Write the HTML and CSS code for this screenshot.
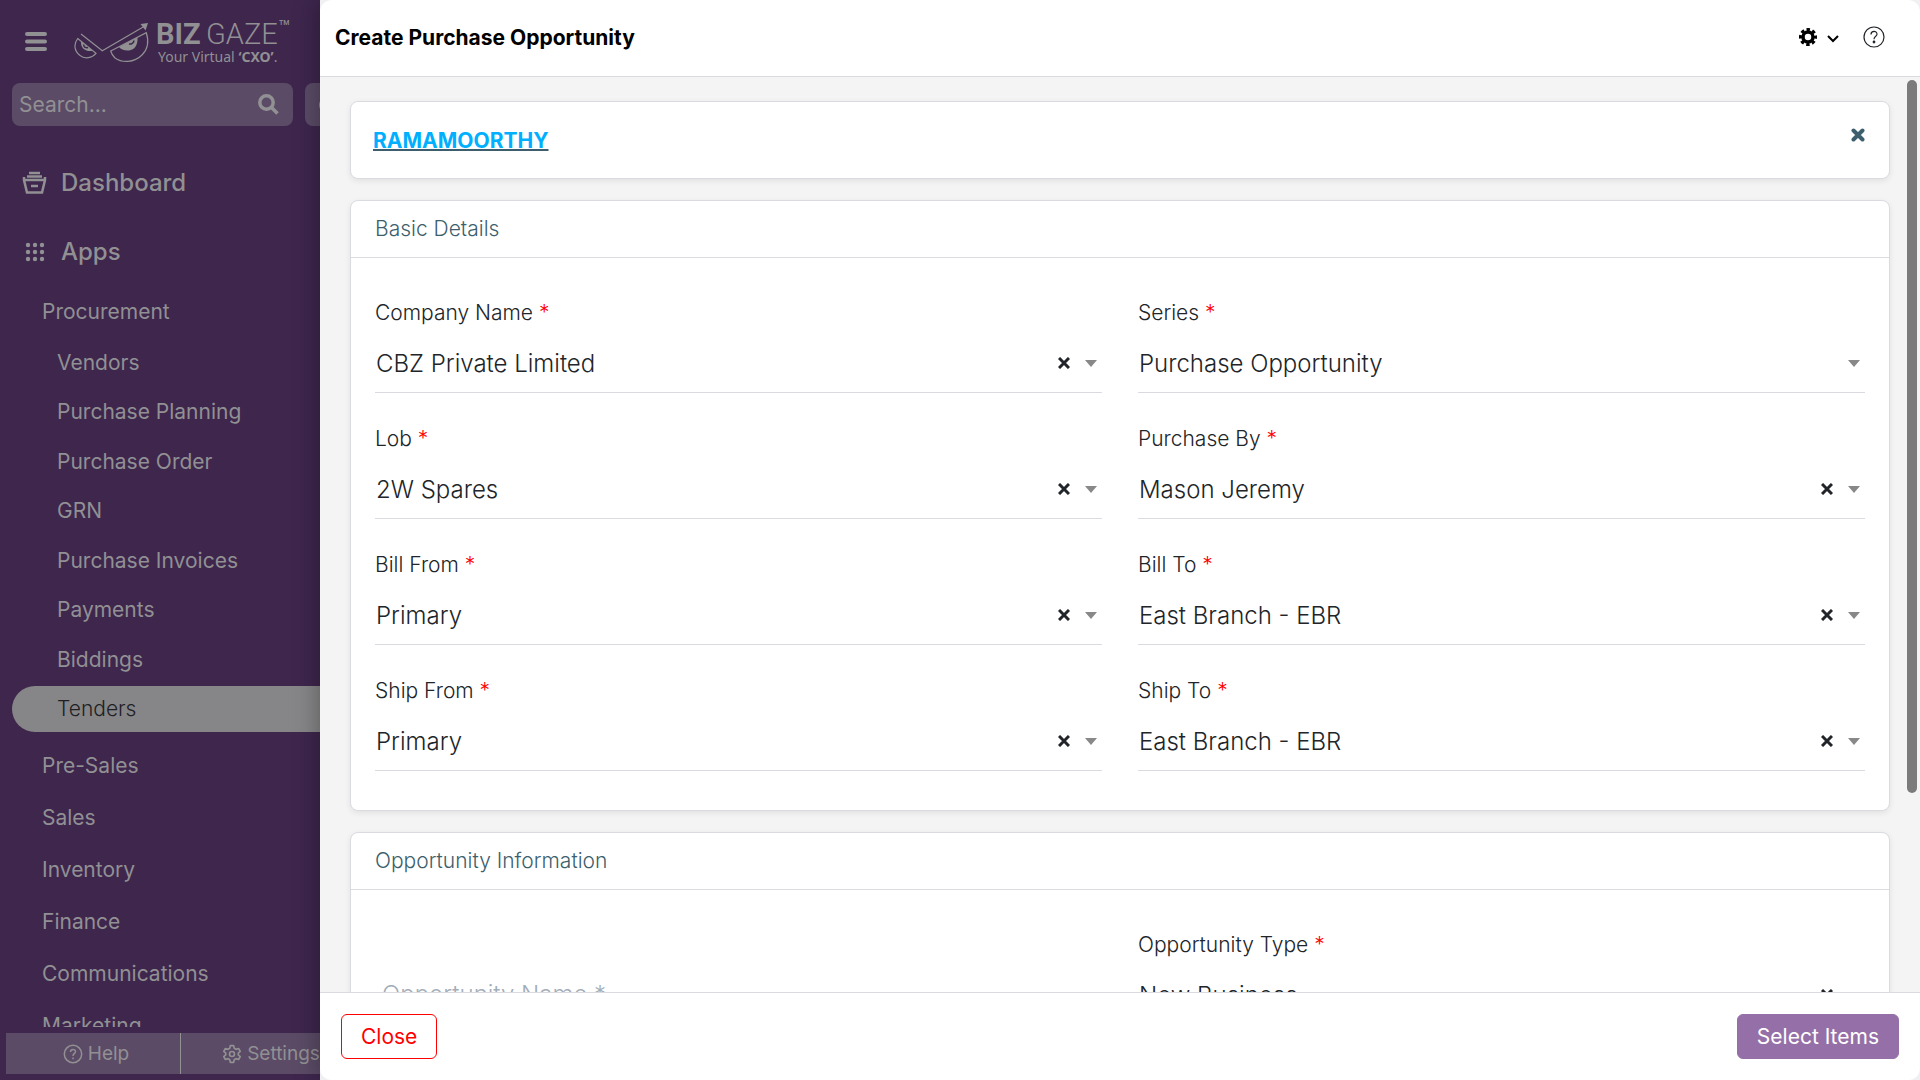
FILE: index.html
```html
<!DOCTYPE html>
<html lang="en">
<head>
  <meta charset="UTF-8" />
  <meta name="viewport" content="width=device-width, initial-scale=1.0"/>
  <title>Create Purchase Opportunity</title>
  <link rel="stylesheet" href="styles.css">
</head>
<body>
  <aside class="sidebar">
    <div class="brand">
      <button class="icon-btn" type="button" aria-label="Menu">
        <svg width="22" height="22" viewBox="0 0 22 22" stroke="currentColor" stroke-width="4" stroke-linecap="round">
          <path d="M2 3h18M2 10.500h18M2 18h18"/>
        </svg>
      </button>
      <svg class="logo" width="216" height="48" viewBox="0 0 216 48" fill="none" stroke="currentColor">
        <path d="M7 16L28.3 32.7L70 8.5" stroke-width="1.2"/>
        <path d="M74 5L66.5 6L71.5 12.5Z" fill="currentColor" stroke="none"/>
        <path d="M3.7 20.5L22 35.3C18 40 11 41.5 6 37.5C0 33 -.5 26 3.7 20.5Z" stroke-width="1.2"/>
        <path d="M36.7 33L72.3 14.7C75 23 74 31 68 37C60 45 48 45 41 40C39 38 37.500 36 36.700 33Z" stroke-width="1.2"/>
        <path d="M7 23.500L18.500 32.700C14 34 6.500 32 7 23.500ZM45 29L63.500 19.500C64 27 60.500 32 55 32.500C50.500 33 47 31.500 45 29Z" fill="currentColor" stroke="none"/>
        <path d="M9.500 26.500C10 29.500 12 30 14 29.500M55 26C57 26.500 60 25 60 22.500" stroke="#3e264d" stroke-width="1.500"/>
        <g fill="currentColor" stroke="none">
          <text class="logo-bold" x="82" y="26">BIZ</text>
          <text class="logo-light" x="132" y="26">GAZE</text>
          <text class="logo-tm" x="205" y="7">TM</text>
          <text class="logo-tag" x="84" y="44">Your Virtual <tspan font-weight="700">‘CXO’</tspan>.</text>
        </g>
      </svg>
    </div>

    <div class="search-row">
      <form class="search">
        <input type="text" placeholder="Search..." aria-label="Search">
        <button class="icon-btn" type="button" aria-label="Search">
          <svg width="21" height="21" viewBox="0 0 21 21" fill="none" stroke="currentColor" stroke-width="3.500">
            <circle cx="8.500" cy="8.500" r="6.700"/><path d="M13.500 13.500L19.500 19.500"/>
          </svg>
        </button>
      </form>
      <button class="filter-btn" type="button" aria-label="Filter">
        <svg width="16" height="16" viewBox="0 0 16 16"><circle cx="8" cy="8" r="7" fill="currentColor"/></svg>
      </button>
    </div>

    <nav class="menu">
      <a class="menu-main" href="#">
        <svg width="25" height="24" viewBox="0 0 25 24" fill="none" stroke="currentColor" stroke-width="2.500">
          <path d="M7 2h11M5 5.500h15M3 9h19M2 6v3l3 12.500h15l3-12.500v-3M9 15h7"/>
        </svg>
        Dashboard
      </a>
      <a class="menu-main" href="#">
        <svg width="25" height="24" viewBox="0 0 25 24" fill="currentColor">
          <circle cx="6" cy="5" r="2.200"/><circle cx="13" cy="5" r="2.200"/><circle cx="20" cy="5" r="2.200"/>
          <circle cx="6" cy="12" r="2.200"/><circle cx="13" cy="12" r="2.200"/><circle cx="20" cy="12" r="2.200"/>
          <circle cx="6" cy="19" r="2.200"/><circle cx="13" cy="19" r="2.200"/><circle cx="20" cy="19" r="2.200"/>
        </svg>
        Apps
      </a>
      <a class="menu-group" href="#">Procurement</a>
      <ul class="submenu">
        <li><a href="#">Vendors</a></li>
        <li><a href="#">Purchase Planning</a></li>
        <li><a href="#">Purchase Order</a></li>
        <li><a href="#">GRN</a></li>
        <li><a href="#">Purchase Invoices</a></li>
        <li><a href="#">Payments</a></li>
        <li><a href="#">Biddings</a></li>
        <li><a class="active" href="#">Tenders</a></li>
      </ul>
      <a class="menu-group" href="#">Pre-Sales</a>
      <a class="menu-group" href="#">Sales</a>
      <a class="menu-group" href="#">Inventory</a>
      <a class="menu-group" href="#">Finance</a>
      <a class="menu-group" href="#">Communications</a>
      <a class="menu-group" href="#">Marketing</a>
    </nav>

    <div class="sidebar-footer">
      <a href="#">
        <svg width="20" height="20" viewBox="0 0 20 20" fill="none" stroke="currentColor" stroke-width="1.500">
          <circle cx="10" cy="10" r="8.700"/><path d="M7.500 8C7.500 4.500 12.700 4.700 12.500 7.800C12.400 9.500 10 9.500 10 12"/><path d="M10 13.500v1.700"/>
        </svg>
        Help
      </a>
      <a href="#">
        <svg width="20" height="20" viewBox="0 0 24 24" fill="none" stroke="currentColor" stroke-width="2" stroke-linejoin="round">
          <path d="M10 2h4l.7 3.200 2 1.200 3.200-1 2 3.500-2.400 2.100v2l2.400 2.100-2 3.500-3.200-1-2 1.200L14 22h-4l-.7-3.200-2-1.200-3.200 1-2-3.500L4.500 13v-2L2.100 8.900l2-3.500 3.200 1 2-1.200z"/><circle cx="12" cy="12" r="3"/>
        </svg>
        Settings
      </a>
    </div>
  </aside>

  <div class="drawer-wrap">
    <main class="drawer">
      <header class="drawer-header">
        <h1>Create Purchase Opportunity</h1>
        <div class="header-tools">
          <button class="icon-btn settings" type="button" aria-label="Options">
            <svg width="18" height="18" viewBox="0 0 18 18" fill="none" stroke="currentColor">
              <circle cx="9" cy="9" r="5" stroke-width="3.500"/>
              <circle cx="9" cy="9" r="7.500" stroke-width="3" stroke-dasharray="3.400 2.490" stroke-dashoffset="1.700"/>
            </svg>
            <svg width="12" height="12" viewBox="0 0 12 12" fill="none" stroke="currentColor" stroke-width="2"><path d="M1 5l5 5 5-5"/></svg>
          </button>
          <button class="icon-btn" type="button" aria-label="Help">
            <svg width="22" height="22" viewBox="0 0 22 22" fill="none" stroke="currentColor" stroke-width="1.200">
              <circle cx="11" cy="11" r="10"/><path d="M8 8.500C8 4.300 14.200 4.500 14 8.200C13.900 10.300 11 10.200 11 13.300"/><circle cx="11" cy="16" r=".8" fill="currentColor"/>
            </svg>
          </button>
        </div>
      </header>

      <div class="drawer-body">
        <section class="card party">
          <a href="#">RAMAMOORTHY</a>
          <button class="icon-btn" type="button" aria-label="Remove">
            <svg width="14" height="14" viewBox="0 0 14 14" stroke="currentColor" stroke-width="4" stroke-linecap="round"><path d="M2.500 2.500l9 9M11.500 2.500l-9 9"/></svg>
          </button>
        </section>

        <section class="card">
          <h2>Basic Details</h2>
          <div class="fields">
            <div class="field">
              <label for="company">Company Name <span class="req">*</span></label>
              <div class="control">
                <select id="company"><option>CBZ Private Limited</option></select>
                <button class="clear" type="button" aria-label="Clear"><svg width="12" height="12" viewBox="0 0 12 12"><path d="M1 1l10 10M11 1L1 11"/></svg></button>
                <span class="arrow"></span>
              </div>
            </div>
            <div class="field">
              <label for="series">Series <span class="req">*</span></label>
              <div class="control">
                <select id="series"><option>Purchase Opportunity</option></select>
                <span class="arrow"></span>
              </div>
            </div>
            <div class="field">
              <label for="lob">Lob <span class="req">*</span></label>
              <div class="control">
                <select id="lob"><option>2W Spares</option></select>
                <button class="clear" type="button" aria-label="Clear"><svg width="12" height="12" viewBox="0 0 12 12"><path d="M1 1l10 10M11 1L1 11"/></svg></button>
                <span class="arrow"></span>
              </div>
            </div>
            <div class="field">
              <label for="purchaseBy">Purchase By <span class="req">*</span></label>
              <div class="control">
                <select id="purchaseBy"><option>Mason Jeremy</option></select>
                <button class="clear" type="button" aria-label="Clear"><svg width="12" height="12" viewBox="0 0 12 12"><path d="M1 1l10 10M11 1L1 11"/></svg></button>
                <span class="arrow"></span>
              </div>
            </div>
            <div class="field">
              <label for="billFrom">Bill From <span class="req">*</span></label>
              <div class="control">
                <select id="billFrom"><option>Primary</option></select>
                <button class="clear" type="button" aria-label="Clear"><svg width="12" height="12" viewBox="0 0 12 12"><path d="M1 1l10 10M11 1L1 11"/></svg></button>
                <span class="arrow"></span>
              </div>
            </div>
            <div class="field">
              <label for="billTo">Bill To <span class="req">*</span></label>
              <div class="control">
                <select id="billTo"><option>East Branch - EBR</option></select>
                <button class="clear" type="button" aria-label="Clear"><svg width="12" height="12" viewBox="0 0 12 12"><path d="M1 1l10 10M11 1L1 11"/></svg></button>
                <span class="arrow"></span>
              </div>
            </div>
            <div class="field">
              <label for="shipFrom">Ship From <span class="req">*</span></label>
              <div class="control">
                <select id="shipFrom"><option>Primary</option></select>
                <button class="clear" type="button" aria-label="Clear"><svg width="12" height="12" viewBox="0 0 12 12"><path d="M1 1l10 10M11 1L1 11"/></svg></button>
                <span class="arrow"></span>
              </div>
            </div>
            <div class="field">
              <label for="shipTo">Ship To <span class="req">*</span></label>
              <div class="control">
                <select id="shipTo"><option>East Branch - EBR</option></select>
                <button class="clear" type="button" aria-label="Clear"><svg width="12" height="12" viewBox="0 0 12 12"><path d="M1 1l10 10M11 1L1 11"/></svg></button>
                <span class="arrow"></span>
              </div>
            </div>
          </div>
        </section>

        <section class="card">
          <h2>Opportunity Information</h2>
          <div class="fields">
            <div class="field field-bottom">
              <div class="control">
                <input type="text" placeholder="Opportunity Name *" aria-label="Opportunity Name">
              </div>
            </div>
            <div class="field">
              <label for="oppType">Opportunity Type <span class="req">*</span></label>
              <div class="control">
                <select id="oppType"><option>New Business</option></select>
                <button class="clear" type="button" aria-label="Clear"><svg width="12" height="12" viewBox="0 0 12 12"><path d="M1 1l10 10M11 1L1 11"/></svg></button>
                <span class="arrow"></span>
              </div>
            </div>
          </div>
        </section>
      </div>

      <footer class="drawer-footer">
        <button class="btn btn-close" type="button">Close</button>
        <button class="btn btn-primary" type="button">Select Items</button>
      </footer>
      <div class="scroll-thumb"></div>
    </main>
  </div>
</body>
</html>
```
FILE: styles.css
```css
* {
  box-sizing: border-box;
}

body {
  margin: 0;
  height: 100vh;
  display: flex;
  overflow: hidden;
  font-family: Inter, "Liberation Sans", sans-serif;
  font-size: 21px;
  color: #212529;
}

button, input, select {
  font-family: inherit;
  font-size: inherit;
  color: inherit;
}

svg {
  display: block;
  flex: none;
}

.icon-btn {
  border: none;
  background: none;
  padding: 0;
  cursor: pointer;
}

/* sidebar */
.sidebar {
  width: 320px;
  flex: none;
  display: flex;
  flex-direction: column;
  background: #3e264d;
  color: #919093;
  overflow: hidden;
}

.sidebar a {
  color: inherit;
  text-decoration: none;
}

.brand {
  display: flex;
  align-items: center;
  gap: 27px;
  padding: 18px 0 17px 25px;
}

.logo-bold {
  font: 700 29px Roboto, sans-serif;
}

.logo-light {
  font: 300 29px Roboto, sans-serif;
}

.logo-tm {
  font: 500 7px Roboto, sans-serif;
}

.logo-tag {
  font: 400 14px "Noto Sans", sans-serif;
}

.search-row {
  display: flex;
  gap: 12px;
  padding-left: 12px;
}

.search {
  width: 281px;
  flex: none;
  display: flex;
  align-items: center;
  padding: 0 14px 0 7px;
  background: #5b4b66;
  border-radius: 8px;
}

.search input {
  flex: 1;
  min-width: 0;
  height: 43px;
  padding: 0;
  border: none;
  outline: none;
  background: none;
}

.search input::placeholder {
  color: #919093;
}

.filter-btn {
  flex: none;
  padding: 0 13px;
  border: none;
  border-radius: 8px;
  background: #5b4b66;
}

.menu {
  flex: 1;
  min-height: 0;
  margin-top: 22px;
  overflow: hidden;
}

.menu-main {
  display: flex;
  align-items: center;
  gap: 14px;
  height: 69px;
  padding-left: 22px;
  font-size: 24px;
  font-weight: 500;
}

.menu-group {
  display: block;
  padding-left: 42px;
  line-height: 52px;
}

.submenu {
  list-style: none;
  margin: 0;
  padding: 2px 0 4px 12px;
}

.submenu a {
  display: block;
  padding-left: 45px;
  margin-bottom: 3px;
  border-radius: 23px 0 0 23px;
  line-height: 46px;
}

.submenu li:nth-child(even) a {
  margin-bottom: 4px;
}

.submenu .active {
  background: #868688;
  color: #1f2023;
  font-weight: 300;
}

.sidebar-footer {
  display: flex;
  margin: 6px 0 6px 6px;
  background: #5b4b66;
  font-size: 19px;
  line-height: 41px;
}

.sidebar-footer a {
  flex: none;
  width: 175px;
  display: flex;
  align-items: center;
  justify-content: center;
  gap: 5px;
  padding-left: 6px;
  border-right: 1px solid #919093;
}

/* drawer */
.drawer-wrap {
  flex: 1;
  min-width: 0;
  display: flex;
  background: #f0f0f2;
  box-shadow: 0 0 24px rgba(0, 0, 0, 0.35);
}

.drawer {
  position: relative;
  flex: 1;
  min-width: 0;
  display: flex;
  flex-direction: column;
  border-radius: 12px;
  background: #f4f4f4;
  overflow: hidden;
}

.drawer-header {
  display: flex;
  align-items: center;
  justify-content: space-between;
  height: 77px;
  padding: 0 35px 2px 15px;
  background: #fff;
  border-bottom: 1px solid #d9dbe1;
}

h1 {
  margin: 0;
  font-size: 21px;
  font-weight: 700;
  color: #000;
}

.header-tools {
  display: flex;
  align-items: center;
  gap: 24px;
}

.settings {
  display: flex;
  align-items: center;
  gap: 10px;
  color: #000;
}

.drawer-body {
  flex: 1;
  min-height: 0;
  padding: 24px 30px 24px 30px;
  overflow-y: auto;
  scrollbar-width: none;
}

.scroll-thumb {
  position: absolute;
  top: 80px;
  right: 3px;
  width: 10px;
  height: 66%;
  border-radius: 5px;
  background: #7b7b7b;
}

.card {
  margin-bottom: 21px;
  background: #fff;
  border: 1px solid #d9dbe1;
  border-radius: 8px;
  box-shadow: 0 2px 6px rgba(0, 0, 0, 0.08);
}

.party {
  display: flex;
  align-items: flex-start;
  justify-content: space-between;
  padding: 26px 24px 24px 22px;
}

.party a {
  color: #00b0ff;
  font-weight: 700;
  line-height: 26px;
  text-decoration-color: #3d5f6d;
  text-decoration-thickness: 2px;
}

.party button {
  color: #3d5f6d;
}

h2 {
  margin: 0;
  padding: 0 24px;
  border-bottom: 1px solid #d9dbe1;
  font-size: 21px;
  font-weight: 300;
  line-height: 56px;
  color: #3d5f6d;
}

.fields {
  display: grid;
  grid-template-columns: 1fr 1fr;
  gap: 30px 36px;
  padding: 39px 24px;
}

.field {
  font-weight: 300;
}

.field-bottom {
  padding-top: 31px;
}

.field label {
  display: block;
  line-height: 32px;
}

.req {
  color: #f00;
}

.control {
  display: flex;
  align-items: center;
  height: 64px;
  padding: 5px 5px 0 1px;
  border-bottom: 1px solid #d9dbe1;
}

.control select {
  appearance: none;
  flex: 1;
  min-width: 0;
  padding: 0;
  border: none;
  outline: none;
  background: none;
  font-size: 24px;
  font-weight: 300;
}

.control input {
  flex: 1;
  min-width: 0;
  padding: 0 6px;
  border: none;
  outline: none;
  background: none;
  font-size: 24px;
  font-weight: 300;
}

.control input::placeholder {
  color: #a3adb8;
}

.clear {
  padding: 0;
  margin-right: 15px;
  border: none;
  background: none;
  stroke: #212529;
  stroke-width: 3;
}

.arrow {
  border: 6px solid transparent;
  border-top: 7px solid #888;
  border-bottom: none;
}

.drawer-footer {
  display: flex;
  align-items: center;
  justify-content: space-between;
  height: 88px;
  padding: 0 21px;
  background: #fff;
  border-top: 1px solid #d9dbe1;
}

.btn {
  height: 45px;
  padding: 0 19px;
  border: 1px solid #9570a8;
  border-radius: 6px;
  font-size: 21px;
  cursor: pointer;
}

.btn-close {
  background: #fff;
  border-color: #f00;
  color: #f00;
}

.btn-primary {
  background: #9570a8;
  color: #fff;
}
```
